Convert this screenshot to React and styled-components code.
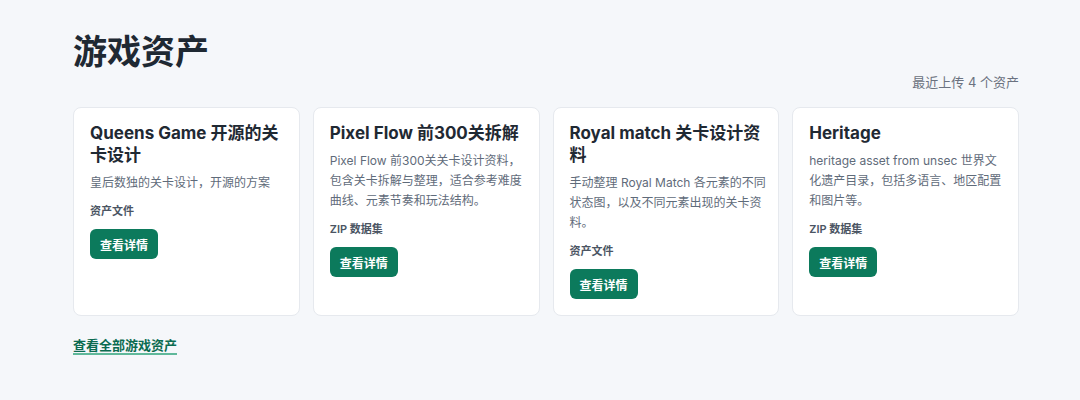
import React from 'react'
import styled, { createGlobalStyle } from 'styled-components'

const GlobalStyle = createGlobalStyle`
    html, body {
        margin: 0;
        padding: 0;
        background: #f5f7fa;
    }
    body {
        font-family: Inter, "Noto Sans CJK SC", sans-serif;
        color: #1f2933;
    }
`

const Page = styled.main`
    width: 946px;
    padding: 30px 0 0 73px;
`

const Heading = styled.h1`
    margin: 0;
    font-size: 34px;
    line-height: 44px;
    font-weight: 700;
    color: #1f2933;
`

const Meta = styled.div`
    text-align: right;
    font-size: 13px;
    line-height: 18px;
    color: #6b7280;
    margin: -1px 0 16px;
`

const Grid = styled.div`
    display: grid;
    grid-template-columns: repeat(4, 1fr);
    gap: 13px;
`

const Card = styled.article`
    background: #fff;
    border: 1px solid #e6e9ee;
    border-radius: 8px;
    padding: 14px 12px 16px 16px;
`

const CardTitle = styled.h3`
    margin: 0;
    font-size: 17px;
    line-height: 22px;
    font-weight: 700;
    color: #1f2933;
`

const Desc = styled.p`
    margin: 7px 0 0;
    font-size: 12px;
    line-height: 20px;
    color: #5f6b7a;
`

const Tag = styled.div`
    margin-top: 10px;
    font-size: 11px;
    line-height: 16px;
    font-weight: 600;
    color: #4b5563;
`

const DetailButton = styled.button`
    margin-top: 10px;
    display: block;
    height: 30px;
    padding: 0 10px;
    border: none;
    border-radius: 6px;
    background: #0c7a5c;
    color: #fff;
    font-family: inherit;
    font-size: 12px;
    font-weight: 700;
    cursor: pointer;
`

const AllLink = styled.a`
    display: inline-block;
    margin-top: 22px;
    font-size: 13px;
    line-height: 15px;
    font-weight: 700;
    color: #0b6b50;
    text-decoration: none;
    border-bottom: 2px solid #5fb89a;
`

const assets = [
    {
        title: 'Queens Game 开源的关卡设计',
        desc: '皇后数独的关卡设计，开源的方案',
        tag: '资产文件'
    },
    {
        title: 'Pixel Flow 前300关拆解',
        desc: 'Pixel Flow 前300关关卡设计资料，包含关卡拆解与整理，适合参考难度曲线、元素节奏和玩法结构。',
        tag: 'ZIP 数据集'
    },
    {
        title: 'Royal match 关卡设计资料',
        desc: '手动整理 Royal Match 各元素的不同状态图，以及不同元素出现的关卡资料。',
        tag: '资产文件'
    },
    {
        title: 'Heritage',
        desc: 'heritage asset from unsec 世界文化遗产目录，包括多语言、地区配置和图片等。',
        tag: 'ZIP 数据集'
    }
]

const App = () => {
    return (
        <Page>
            <GlobalStyle />
            <Heading>游戏资产</Heading>
            <Meta>最近上传 4 个资产</Meta>
            <Grid>
                {assets.map(a => (
                    <Card key={a.title}>
                        <CardTitle>{a.title}</CardTitle>
                        <Desc>{a.desc}</Desc>
                        <Tag>{a.tag}</Tag>
                        <DetailButton>查看详情</DetailButton>
                    </Card>
                ))}
            </Grid>
            <AllLink href="#">查看全部游戏资产</AllLink>
        </Page>
    )
}

export default App
